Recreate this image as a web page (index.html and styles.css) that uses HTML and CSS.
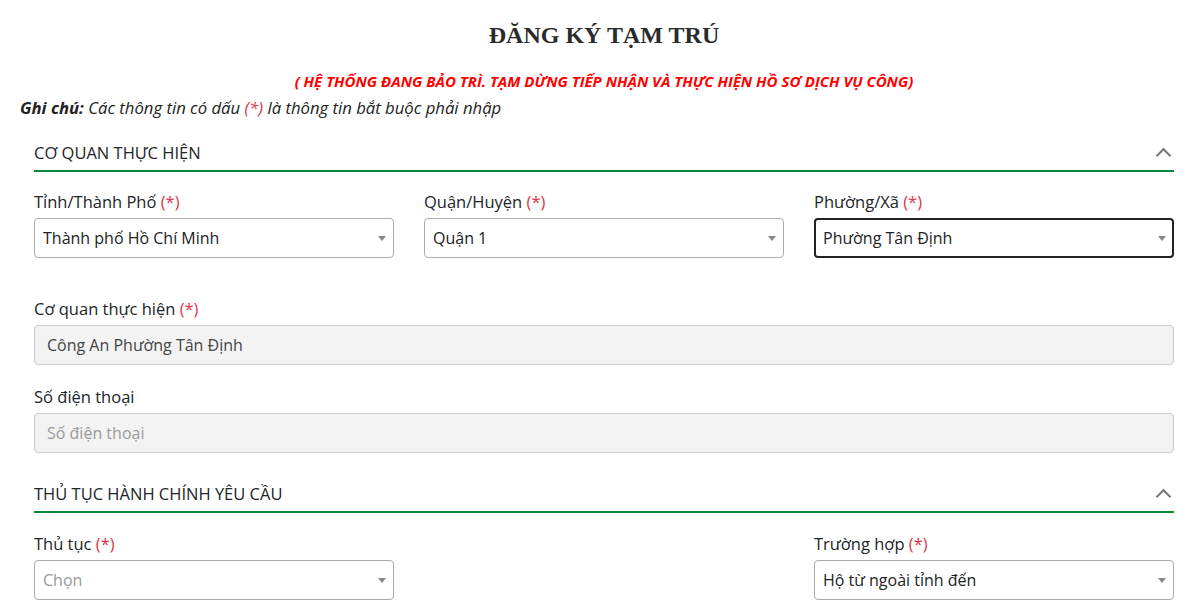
FILE: index.html
```html
<!DOCTYPE html>
<html>
<head>
	<meta charset="utf-8">
	<title>Đăng ký tạm trú</title>
	<link rel="stylesheet" href="styles.css">
</head>
<body>
	<main class="page">
		<h1 class="title">ĐĂNG KÝ TẠM TRÚ</h1>
		<p class="notice">( HỆ THỐNG ĐANG BẢO TRÌ. TẠM DỪNG TIẾP NHẬN VÀ THỰC HIỆN HỒ SƠ DỊCH VỤ CÔNG)</p>
		<p class="note"><b>Ghi chú:</b> Các thông tin có dấu <span class="req">(*)</span> là thông tin bắt buộc phải nhập</p>

		<section class="block">
			<div class="block-head">
				<span>CƠ QUAN THỰC HIỆN</span>
				<span class="chevron"></span>
			</div>
			<div class="row">
				<div class="field">
					<label>Tỉnh/Thành Phố <span class="req">(*)</span></label>
					<div class="select">Thành phố Hồ Chí Minh</div>
				</div>
				<div class="field">
					<label>Quận/Huyện <span class="req">(*)</span></label>
					<div class="select">Quận 1</div>
				</div>
				<div class="field">
					<label>Phường/Xã <span class="req">(*)</span></label>
					<div class="select focus">Phường Tân Định</div>
				</div>
			</div>
			<div class="field wide">
				<label>Cơ quan thực hiện <span class="req">(*)</span></label>
				<div class="input">Công An Phường Tân Định</div>
			</div>
			<div class="field wide">
				<label>Số điện thoại</label>
				<div class="input placeholder">Số điện thoại</div>
			</div>
		</section>

		<section class="block">
			<div class="block-head">
				<span>THỦ TỤC HÀNH CHÍNH YÊU CẦU</span>
				<span class="chevron"></span>
			</div>
			<div class="row">
				<div class="field">
					<label>Thủ tục <span class="req">(*)</span></label>
					<div class="select placeholder">Chọn</div>
				</div>
				<div class="field"></div>
				<div class="field">
					<label>Trường hợp <span class="req">(*)</span></label>
					<div class="select">Hộ từ ngoài tỉnh đến</div>
				</div>
			</div>
		</section>
	</main>
</body>
</html>
```

FILE: styles.css
```css
body {
	margin: 0;
	font-family: "Open Sans", sans-serif;
	color: #212529;
	background: #fff;
}

.page {
	padding: 0 15px 0 20px;
}

.title {
	margin: 0;
	padding-top: 18px;
	text-align: center;
	font-family: "Liberation Serif", serif;
	font-size: 24px;
	font-weight: bold;
	color: #2b2b2b;
	line-height: 34px;
}

.notice {
	margin: 19px 0 0;
	text-align: center;
	color: #ff0000;
	font-size: 15px;
	font-weight: bold;
	font-style: italic;
	line-height: 20px;
}

.note {
	margin: 5px 0 0;
	font-size: 16.7px;
	font-style: italic;
	line-height: 24px;
	color: #222;
}

.req {
	color: #dc3545;
	font-weight: normal;
}

.block {
	padding: 0 14px;
}

.block + .block {
	padding-top: 8px;
}

.block-head {
	display: flex;
	justify-content: space-between;
	align-items: center;
	margin-top: 14px;
	height: 36px;
	border-bottom: 2px solid #0b8a3e;
	font-size: 16.5px;
	text-transform: uppercase;
	color: #212529;
}

.chevron {
	width: 9px;
	height: 9px;
	margin-right: 5px;
	margin-top: 6px;
	border-left: 2px solid #777;
	border-top: 2px solid #777;
	transform: rotate(45deg);
}

.row {
	display: grid;
	grid-template-columns: repeat(3, 1fr);
	gap: 30px;
	margin-top: 18px;
}

.block + .block .row {
	margin-top: 19px;
}

.field label {
	display: block;
	font-size: 16.5px;
	line-height: 24px;
	margin-bottom: 4px;
}

.wide {
	margin-top: 39px;
}

.wide + .wide {
	margin-top: 20px;
}

.select {
	position: relative;
	height: 40px;
	box-sizing: border-box;
	border: 1px solid #aaa;
	border-radius: 4px;
	padding: 0 8px;
	line-height: 38px;
	font-size: 16px;
	color: #222;
}

.select::after {
	content: "";
	position: absolute;
	right: 7px;
	top: 17px;
	border-left: 4px solid transparent;
	border-right: 4px solid transparent;
	border-top: 5px solid #888;
}

.select.focus {
	border: 2px solid #222;
	padding: 0 7px;
	line-height: 36px;
}

.select.focus::after {
	right: 6px;
	top: 16px;
}

.input {
	height: 40px;
	box-sizing: border-box;
	border: 1px solid #ccc;
	border-radius: 4px;
	background: #f3f3f3;
	padding: 0 12px;
	line-height: 38px;
	font-size: 16px;
	color: #444;
}

.placeholder {
	color: #999;
}
```
